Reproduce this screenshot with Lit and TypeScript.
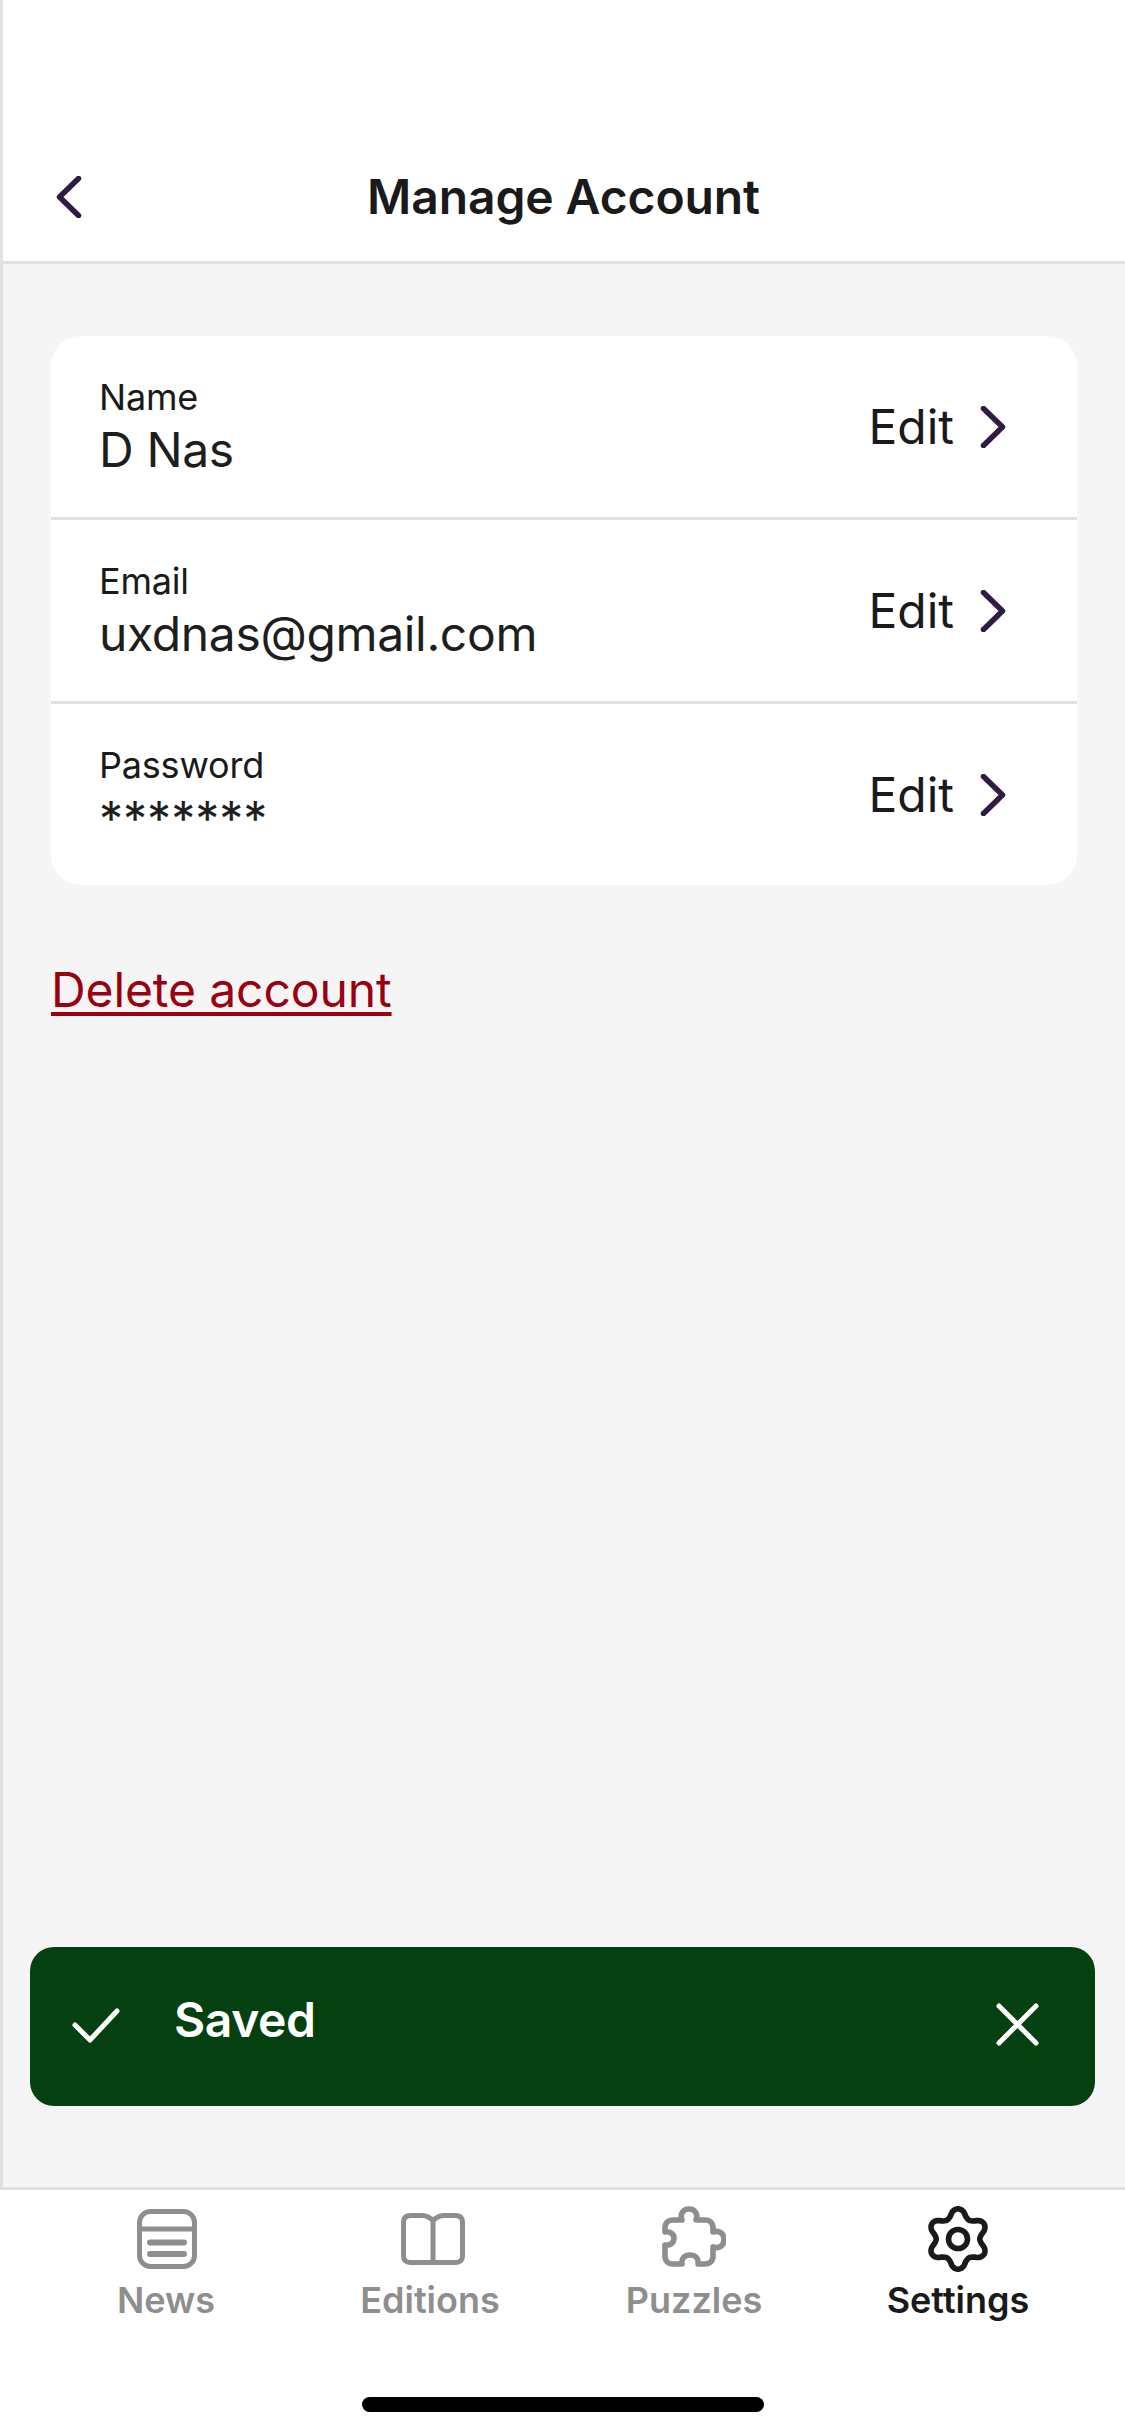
import { LitElement, html, css, svg } from "lit";
import { customElement } from "lit/decorators.js";

const gearPath = (() => {
  const pts: string[] = [];
  for (let i = 0; i < 120; i++) {
    const t = (i / 120) * Math.PI * 2;
    const c = Math.cos(6 * t);
    const r = 26 + 4.2 * (Math.sign(c) * Math.pow(Math.abs(c), 0.8));
    const x = 33 + r * Math.sin(t);
    const y = 33 - r * Math.cos(t);
    pts.push(`${x.toFixed(2)} ${y.toFixed(2)}`);
  }
  return "M" + pts.join("L") + "Z";
})();

const chevron = (cls: string, d: string) => html`<svg class=${cls} viewBox="0 0 26 42" fill="none" stroke="currentColor" stroke-width="5.5" stroke-linecap="round" stroke-linejoin="round"><path d=${d}></path></svg>`;

const icons: Record<string, unknown> = {
  News: svg`<rect x="2.5" y="2.5" width="55" height="55" rx="11"></rect><path d="M3 20H57"></path><path d="M13 33.5H47M13 45H47" stroke-width="6"></path>`,
  Editions: svg`<path d="M33 9C30 5 26 3.5 22 3.5H11C6 3.5 3.5 6 3.5 10V44C3.5 48 6 50.5 10 50.5H56C60 50.5 62.5 48 62.5 44V10C62.5 6 60 3.5 55 3.5H44C40 3.5 36 5 33 9V50.5"></path>`,
  Puzzles: svg`<path stroke-width="5.6" d="M26 14C24 9 26 3 33 3C40 3 42 9 40 14H49C54 14 57 17 57 22V26C63 24 68 27 68 33.5C68 40 63 43 57 41V50C57 55 54 58 49 58H42C43 52 39 49 34 49C29 49 25 52 26 58H17C12 58 9 55 9 50V39C15 40 18 36 18 32C18 28 14 25 9 26V22C9 17 12 14 17 14Z"></path>`,
  Settings: svg`<g stroke-width="5.6"><path d=${gearPath}></path><circle cx="33" cy="33" r="9.5"></circle></g>`,
};

const rows = [
  { label: "Name", value: "D Nas", secret: false },
  { label: "Email", value: "uxdnas@gmail.com", secret: false },
  { label: "Password", value: "*******", secret: true },
];

const tabs = [
  { name: "News", w: 60, h: 60, dx: 1, active: false },
  { name: "Editions", w: 66, h: 54, dx: 3, active: false },
  { name: "Puzzles", w: 70, h: 66, dx: -3, active: false },
  { name: "Settings", w: 66, h: 66, dx: 0, active: true },
];

@customElement("app-root")
export class AppRoot extends LitElement {
  static styles = css`
    :host {
      display: flex;
      flex-direction: column;
      position: relative;
      width: 1125px;
      height: 2436px;
      background: #fff;
      font-family: "Inter", "Liberation Sans", sans-serif;
      color: #1a1a1a;
      overflow: hidden;
    }
    .header {
      display: grid;
      grid-template-columns: 1fr auto 1fr;
      align-items: center;
      height: 264px;
      box-sizing: border-box;
      padding: 133px 0 0 53px;
      border-left: 3px solid #e0e0e0;
      border-bottom: 3px solid #e0e0e0;
      background: #fff;
    }
    .back {
      width: 26px;
      height: 42px;
      color: #2f1b45;
    }
    .title {
      font-size: 48px;
      line-height: 58px;
      font-weight: 600;
      letter-spacing: -0.1px;
      transform: translateX(-27px);
    }
    .main {
      flex: 1;
      display: flex;
      flex-direction: column;
      align-items: flex-start;
      box-sizing: border-box;
      padding: 72px 48px 0;
      background: #f5f5f5;
      border-left: 3px solid #e0e0e0;
    }
    .card {
      width: 1026px;
      background: #fff;
      border-radius: 30px;
      overflow: hidden;
    }
    .row {
      display: flex;
      align-items: center;
      justify-content: space-between;
      height: 181px;
      box-sizing: border-box;
      padding: 0 71px 0 48px;
    }
    .row + .row {
      height: 184px;
      border-top: 3px solid #e0e0e0;
    }
    .field {
      padding-top: 3px;
    }
    .label {
      font-size: 36px;
      line-height: 40px;
      letter-spacing: -0.2px;
    }
    .value {
      margin-top: 4px;
      font-size: 48px;
      line-height: 58px;
      color: #1e1e1e;
      letter-spacing: -0.35px;
    }
    .value.secret {
      letter-spacing: 0;
      transform: translateY(1px);
    }
    .action {
      display: flex;
      align-items: center;
      gap: 26px;
      font-size: 48px;
      line-height: 58px;
    }
    .chev {
      width: 26px;
      height: 42px;
      color: #2f1b45;
    }
    .delete {
      margin-top: 76px;
      font-size: 48px;
      line-height: 58px;
      color: #990011;
      letter-spacing: -0.1px;
      text-decoration: underline;
      text-decoration-thickness: 4px;
      text-underline-offset: 5px;
    }
    .toast {
      position: absolute;
      left: 30px;
      top: 1947px;
      width: 1065px;
      height: 159px;
      box-sizing: border-box;
      display: flex;
      align-items: center;
      border-radius: 24px;
      background: #054011;
      color: #fff;
      padding: 0 56px 2px 42px;
    }
    .check {
      width: 48px;
      height: 36px;
      flex: none;
    }
    .saved {
      flex: 1;
      margin-left: 54px;
      font-size: 48px;
      line-height: 58px;
      font-weight: 600;
      letter-spacing: -0.4px;
      transform: translateY(-6px);
    }
    .close {
      width: 43px;
      height: 43px;
      flex: none;
      margin-bottom: 2px;
    }
    .nav {
      display: flex;
      flex-direction: column;
      height: 249px;
      box-sizing: border-box;
      border-top: 3px solid #e0e0e0;
      background: #fff;
    }
    .tabs {
      display: grid;
      grid-template-columns: repeat(4, 264px);
      padding: 16px 0 0 34px;
    }
    .tab {
      display: flex;
      flex-direction: column;
      align-items: center;
      font-size: 36px;
      line-height: 44px;
      font-weight: 600;
      color: #8e8e8e;
    }
    .tab.active {
      color: #1a1a1a;
    }
    .iconbox {
      height: 66px;
      display: flex;
      align-items: center;
      justify-content: center;
      margin-bottom: 6px;
    }
    .iconbox svg {
      fill: none;
      stroke: currentColor;
      stroke-width: 5;
      stroke-linecap: round;
      stroke-linejoin: round;
      display: block;
    }
    .home {
      align-self: center;
      width: 402px;
      height: 15px;
      border-radius: 8px;
      background: #000;
      margin-top: auto;
      margin-bottom: 24px;
    }
  `;

  render() {
    return html`
      <header class="header">
        ${chevron("back", "M22.5 2.5L3.5 21L22.5 39.5")}
        <div class="title">Manage Account</div>
        <div></div>
      </header>
      <main class="main">
        <section class="card">
          ${rows.map(
            (r) => html`<div class="row">
              <div class="field">
                <div class="label">${r.label}</div>
                <div class="value ${r.secret ? "secret" : ""}">${r.value}</div>
              </div>
              <div class="action">
                <span>Edit</span>
                ${chevron("chev", "M3.5 2.5L22.5 21L3.5 39.5")}
              </div>
            </div>`
          )}
        </section>
        <a class="delete">Delete account</a>
      </main>
      <div class="toast">
        <svg class="check" viewBox="0 0 48 36" fill="none" stroke="currentColor" stroke-width="5" stroke-linecap="round" stroke-linejoin="round"><path d="M3 17L18 32L45 3"></path></svg>
        <div class="saved">Saved</div>
        <svg class="close" viewBox="0 0 43 43" fill="none" stroke="currentColor" stroke-width="5" stroke-linecap="round"><path d="M3 3L40 40M40 3L3 40"></path></svg>
      </div>
      <nav class="nav">
        <div class="tabs">
          ${tabs.map(
            (t) => html`<div class="tab ${t.active ? "active" : ""}">
              <div class="iconbox" style="margin-left:${t.dx * 2}px">
                <svg width=${t.w} height=${t.h} viewBox="0 0 ${t.w} ${t.h}">${icons[t.name]}</svg>
              </div>
              <span>${t.name}</span>
            </div>`
          )}
        </div>
        <div class="home"></div>
      </nav>
    `;
  }
}
